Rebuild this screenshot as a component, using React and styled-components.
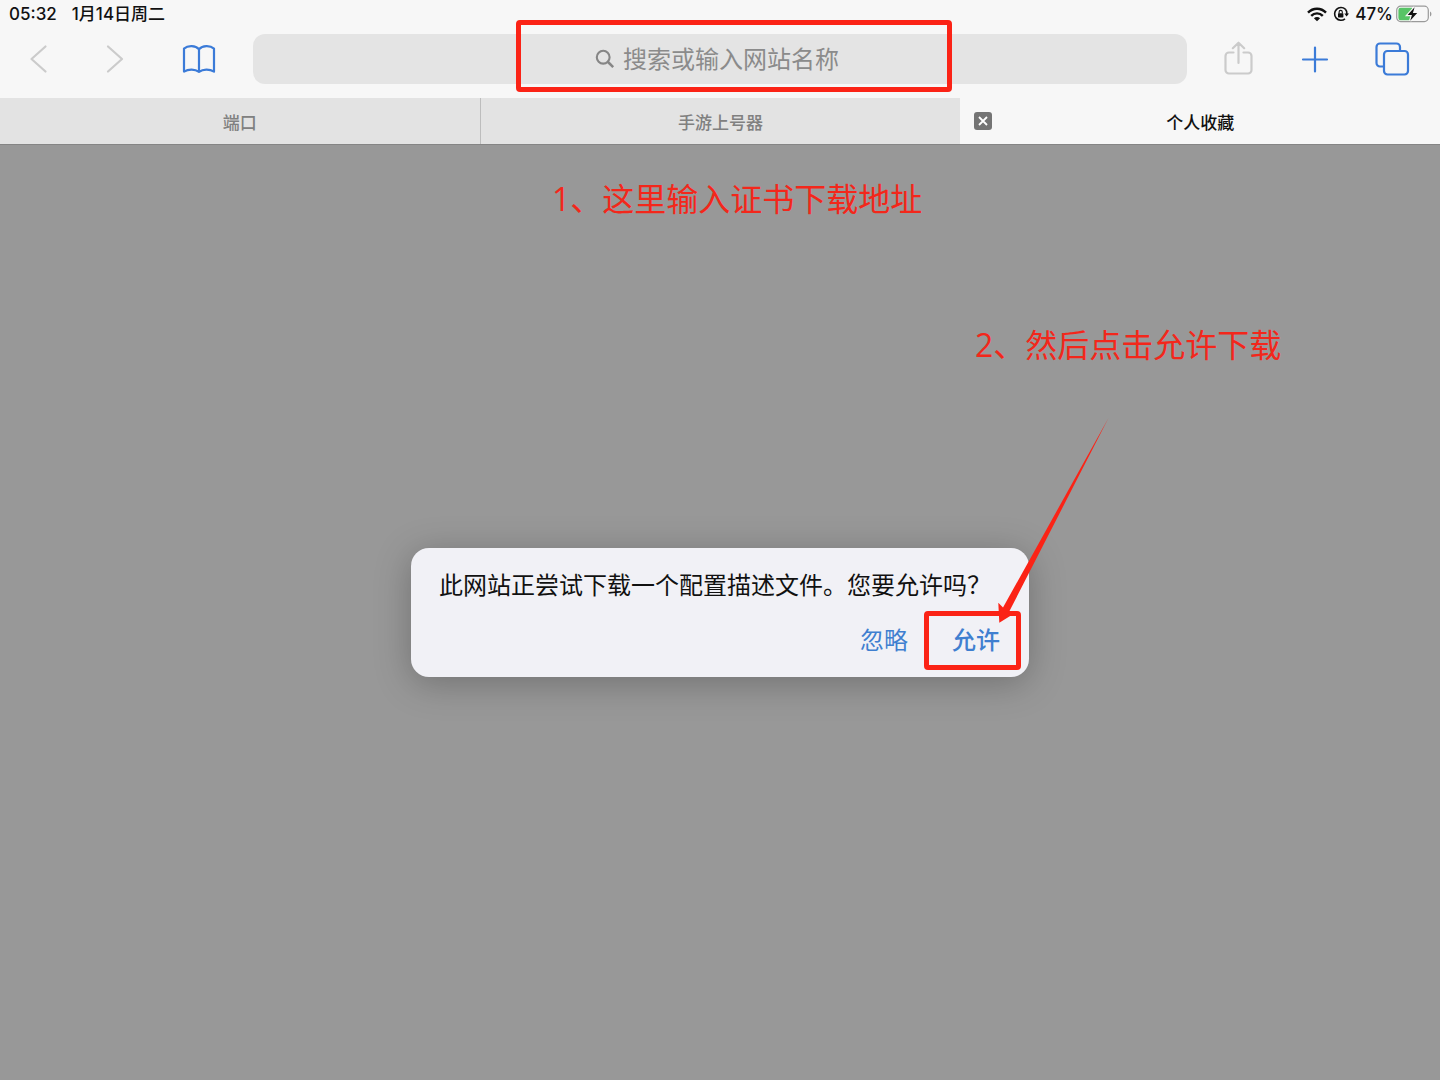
import React, {useState} from "react";
import styled, {createGlobalStyle} from "styled-components";

const StatusIcons = () =>{
  return(
    <>
    <svg width="20" height="15" viewBox="0 0 20 15" fill="none" stroke="#111" strokeWidth="2.4">
      <path d="M1 5.6C6 .4 14 .4 19 5.6" />
      <path d="M4.2 8.8c3.2-3.3 8.4-3.3 11.6 0" />
      <path d="M6.9 11.2c1.8-1.6 4.4-1.6 6.2 0L10 14.3z" fill="#111" stroke="none" />
    </svg>
    <svg width="16" height="16" viewBox="0 0 16 16" fill="none" stroke="#111">
      <path d="M12.3 3.1A6.4 6.4 0 1 0 12 12.9" strokeWidth="1.6" />
      <path d="M12.3 3.1c1.2 1.2 1.7 2.8 1.6 5.1" strokeWidth="1.6" />
      <path d="M11.3 7.4H16l-2.4 3.2z" fill="#111" stroke="none" />
      <rect x="5" y="7.2" width="5.4" height="4.2" rx=".6" fill="#111" stroke="none" />
      <path d="M6.1 7.6V6a1.6 1.6 0 0 1 3.2 0v1.6" strokeWidth="1.1" />
    </svg>
    </>
  )
}

const Battery = () =>(
  <svg width="37" height="18" viewBox="0 0 37 18">
    <rect x=".7" y="1.2" width="31.6" height="15.4" rx="4" fill="none" stroke="#9a9a9a" strokeWidth="1.2" />
    <path d="M34 6.4c1.9.7 1.9 4.3 0 5z" fill="#9a9a9a" />
    <path d="M4.6 2.8H16v12.4H4.6A2.2 2.2 0 0 1 2.4 13V5a2.2 2.2 0 0 1 2.2-2.2z" fill="#57c466" />
    <path d="M18.6 2.2 11.6 10h4.3l-1.7 5.8 7-7.8h-4.3z" fill="#111" stroke="#f7f7f7" strokeWidth="2.4" paintOrder="stroke" />
  </svg>
)

const App = () =>{

  const [address, setAddress] = useState("");

  return(
    <>
    <GlobalStyle />
    <Page>
      <StatusBar>
        <StatusGroup gap={15}>
          <span>05:32</span>
          <span>1月14日周二</span>
        </StatusGroup>
        <StatusGroup gap={6}>
          <StatusIcons />
          <BatteryWrapper>
            47%
            <Battery />
          </BatteryWrapper>
        </StatusGroup>
      </StatusBar>

      <Toolbar>
        <ButtonGroup gap={36}>
          <IconButton aria-label="后退" disabled>
            <svg width="32" height="36" viewBox="0 0 32 36"><path d="M22.5 5.5 8.5 18l14 12.5" /></svg>
          </IconButton>
          <IconButton aria-label="前进" disabled>
            <svg width="32" height="36" viewBox="0 0 32 36"><path d="M9 5.5 23 18 9 30.5" /></svg>
          </IconButton>
        </ButtonGroup>
        <BookmarkButton aria-label="书签">
          <svg width="34" height="36" viewBox="0 0 34 36">
            <path d="M17 8.2C13.5 4.4 6 4.2 2 7.6v23c4.5-2.8 11-2.6 15 .2 4-2.8 10.5-3 15-.2v-23C28 4.2 20.5 4.4 17 8.2zV30.8" />
          </svg>
        </BookmarkButton>

        <Field>
          <svg width="20" height="20" viewBox="0 0 20 20" fill="none" stroke="#868686" strokeWidth="2.1">
            <circle cx="8.2" cy="8.2" r="6.4" />
            <path d="m13 13 5.2 5.2" strokeWidth="2.5" />
          </svg>
          <AddressInput
            aria-label="网址"
            placeholder="搜索或输入网站名称"
            value={address}
            onChange={(e) => setAddress(e.target.value)}
          />
          <FieldMark />
        </Field>

        <ButtonGroup gap={37}>
          <IconButton aria-label="共享" disabled>
            <svg width="32" height="36" viewBox="0 0 32 36">
              <path d="M11.5 11.5H7A3.5 3.5 0 0 0 3.5 15v14A3.5 3.5 0 0 0 7 32.5h19a3.5 3.5 0 0 0 3.5-3.5V15a3.5 3.5 0 0 0-3.5-3.5h-4.500M16.5 22V1.8M10.8 7.2l5.7-5.5 5.7 5.5" />
            </svg>
          </IconButton>
          <IconButton aria-label="新标签页">
            <svg width="32" height="36" viewBox="0 0 32 36"><path d="M16 6.500v24M4 18.500h24" /></svg>
          </IconButton>
          <IconButton aria-label="所有标签页">
            <svg width="36" height="36" viewBox="0 0 36 36">
              <path d="M10 25.5H6A3.5 3.5 0 0 1 2.5 22V6A3.5 3.5 0 0 1 6 2.500h16.5A3.5 3.5 0 0 1 26 6v4" />
              <rect x="10" y="10" width="24" height="23.5" rx="3.5" />
            </svg>
          </IconButton>
        </ButtonGroup>
      </Toolbar>

      <Tabs>
        <Tab><TabTitle>端口</TabTitle></Tab>
        <Tab><TabTitle>手游上号器</TabTitle></Tab>
        <Tab active>
          <CloseButton aria-label="关闭标签页">
            <svg width="18" height="18" viewBox="0 0 18 18" stroke="#fff" strokeWidth="1.8">
              <path d="m5 5 8 8M13 5l-8 8" />
            </svg>
          </CloseButton>
          <TabTitle active>个人收藏</TabTitle>
        </Tab>
      </Tabs>

      <Content>
        <AddressNote>1、这里输入证书下载地址</AddressNote>
        <AllowNote>2、然后点击允许下载</AllowNote>

        <Dialog role="dialog" aria-labelledby="profile-message">
          <Message id="profile-message">此网站正尝试下载一个配置描述文件。您要允许吗？</Message>
          <Actions>
            <ActionButton>忽略</ActionButton>
            <ActionButton primary>
              允许
              <AllowMark />
            </ActionButton>
          </Actions>
          <Arrow width="125" height="215" viewBox="0 0 125 215">
            <path d="M118.500 3 13 192.500l-4.700-4.800 1 20L25 198l-5.500-2z" fill="#fb2316" />
          </Arrow>
        </Dialog>
      </Content>
    </Page>
    </>
  )
}

export default App;

const GlobalStyle = createGlobalStyle`
  * {
    box-sizing: border-box;
  }
  body {
    margin: 0;
    font-family: Inter, "Noto Sans CJK SC", sans-serif;
  }
  button, input {
    font-family: inherit;
    padding: 0;
    border: none;
    background: none;
  }
  svg {
    display: block;
    flex: none;
  }
`;

const Page = styled.div`
display:flex;
flex-direction:column;
min-height:100vh;
background-color:#f7f7f7;
`;

const StatusBar = styled.header`
display:flex;
align-items:center;
justify-content:space-between;
height:28px;
padding:0 7px 0 9px;
font-size:17px;
font-weight:500;
line-height:24px;
color:#111;
`;

const StatusGroup = styled.div.withConfig({ shouldForwardProp: (prop) => prop !== "gap" })`
display:flex;
align-items:center;
gap:${({ gap }) => gap}px;
`;

const BatteryWrapper = styled.span`
display:flex;
align-items:center;
gap:3px;
`;

const Toolbar = styled.div`
display:flex;
align-items:center;
padding:6px 28px 14px 19px;
`;

const ButtonGroup = styled.div.withConfig({ shouldForwardProp: (prop) => prop !== "gap" })`
display:flex;
gap:${({ gap }) => gap}px;
`;

const IconButton = styled.button`
display:flex;
align-items:center;
justify-content:center;
width:40px;
height:50px;
cursor:pointer;

  svg {
    fill: none;
    stroke: ${({ disabled }) => (disabled ? "#cbcbcb" : "#3b7bd8")};
    stroke-width: 2.2;
    stroke-linecap: round;
    stroke-linejoin: round;
  }
`;

const BookmarkButton = styled(IconButton)`
margin-left:44px;
`;

const Field = styled.label`
position:relative;
display:flex;
flex:1;
align-items:center;
justify-content:center;
gap:8px;
height:50px;
margin:0 31px 0 34px;
border-radius:12px;
background-color:#e4e4e4;
`;

const AddressInput = styled.input`
width:222px;
height:36px;
font-size:24px;
color:#111;
outline:none;

  &::placeholder {
    color: #8b8b8b;
    opacity: 1;
  }
`;

const Mark = styled.span`
position:absolute;
border:5px solid #fb2316;
border-radius:4px;
pointer-events:none;
`;

const FieldMark = styled(Mark)`
top:-14px;
left:calc(50% - 204px);
width:436px;
height:72px;
`;

const AllowMark = styled(Mark)`
top:-14px;
right:-21px;
bottom:-13px;
left:-28px;
`;

const Tabs = styled.nav`
display:flex;
height:47px;
border-bottom:1px solid #858585;
`;

const Tab = styled.div.withConfig({ shouldForwardProp: (prop) => prop !== "active" })`
display:grid;
grid-template-columns:18px 1fr 18px;
align-items:center;
flex:1;
padding:0 14px;
background-color:${({ active }) => (active ? "#f7f7f7" : "#e3e3e3")};

  &:first-child {
    border-right: 1px solid #bdbdbd;
  }
`;

const TabTitle = styled.button.withConfig({ shouldForwardProp: (prop) => prop !== "active" })`
grid-column:2;
height:46px;
font-size:17px;
font-weight:500;
color:${({ active }) => (active ? "#111" : "#808080")};
cursor:pointer;
`;

const CloseButton = styled.button`
width:18px;
height:18px;
border-radius:3px;
background-color:#747474;
cursor:pointer;
`;

const Content = styled.main`
position:relative;
display:flex;
flex:1;
align-items:center;
justify-content:center;
background-color:#989898;
`;

const Note = styled.p`
position:absolute;
margin:0;
font-family:"Open Sans", "Noto Sans CJK SC", sans-serif;
font-size:32px;
line-height:40px;
white-space:nowrap;
color:#f3271b;
`;

const AddressNote = styled(Note)`
top:34px;
left:calc(50% - 168px);
`;

const AllowNote = styled(Note)`
top:180px;
left:calc(50% + 255px);
`;

const Dialog = styled.section`
position:relative;
width:618px;
padding:22px 29px 20px 28px;
border-radius:18px;
background-color:#f1f1f6;
box-shadow:0 6px 36px rgba(0, 0, 0, 0.26);
`;

const Message = styled.p`
margin:0;
font-size:24px;
line-height:32px;
white-space:nowrap;
color:#111;
`;

const Actions = styled.div`
display:flex;
justify-content:flex-end;
gap:44px;
margin-top:23px;
`;

const ActionButton = styled.button.withConfig({ shouldForwardProp: (prop) => prop !== "primary" })`
position:relative;
height:32px;
font-size:24px;
font-weight:${({ primary }) => (primary ? 500 : 400)};
line-height:32px;
color:#3f7fd0;
cursor:pointer;
`;

const Arrow = styled.svg`
position:absolute;
top:-133px;
right:-86px;
pointer-events:none;
`;
